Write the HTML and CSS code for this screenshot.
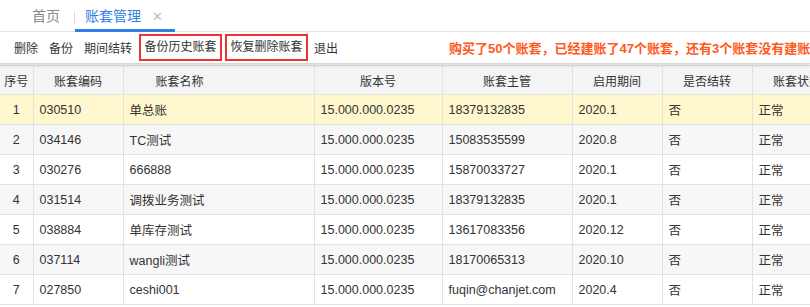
FILE: index.html
```html
<!DOCTYPE html>
<html lang="zh">
<head>
<meta charset="utf-8">
<link rel="stylesheet" href="styles.css">
</head>
<body>
<div class="tabs">
  <div class="tab">首页</div>
  <div class="tab-sep"></div>
  <div class="tab active">账套管理<span class="close">✕</span></div>
</div>
<div class="toolbar">
  <span class="btn">删除</span>
  <span class="btn">备份</span>
  <span class="btn">期间结转</span>
  <span class="btn boxed">备份历史账套</span>
  <span class="btn boxed">恢复删除账套</span>
  <span class="btn">退出</span>
  <span class="notice">购买了50个账套，已经建账了47个账套，还有3个账套没有建账</span>
</div>
<table class="grid">
  <colgroup>
    <col class="c1"><col class="c2"><col class="c3"><col class="c4"><col class="c5"><col class="c6"><col class="c7"><col class="c8">
  </colgroup>
  <thead>
    <tr><th>序号</th><th>账套编码</th><th class="name-h">账套名称</th><th>版本号</th><th>账套主管</th><th>启用期间</th><th>是否结转</th><th>账套状态</th></tr>
  </thead>
  <tbody>
    <tr class="sel"><td class="num">1</td><td>030510</td><td>单总账</td><td>15.000.000.0235</td><td>18379132835</td><td>2020.1</td><td>否</td><td>正常</td></tr>
    <tr class="alt"><td class="num">2</td><td>034146</td><td>TC测试</td><td>15.000.000.0235</td><td>15083535599</td><td>2020.8</td><td>否</td><td>正常</td></tr>
    <tr><td class="num">3</td><td>030276</td><td>666888</td><td>15.000.000.0235</td><td>15870033727</td><td>2020.1</td><td>否</td><td>正常</td></tr>
    <tr class="alt"><td class="num">4</td><td>031514</td><td>调拨业务测试</td><td>15.000.000.0235</td><td>18379132835</td><td>2020.1</td><td>否</td><td>正常</td></tr>
    <tr><td class="num">5</td><td>038884</td><td>单库存测试</td><td>15.000.000.0235</td><td>13617083356</td><td>2020.12</td><td>否</td><td>正常</td></tr>
    <tr class="alt"><td class="num">6</td><td>037114</td><td>wangli测试</td><td>15.000.000.0235</td><td>18170065313</td><td>2020.10</td><td>否</td><td>正常</td></tr>
    <tr><td class="num">7</td><td>027850</td><td>ceshi001</td><td>15.000.000.0235</td><td>fuqin@chanjet.com</td><td>2020.4</td><td>否</td><td>正常</td></tr>
  </tbody>
</table>
</body>
</html>
```
FILE: styles.css
```css
html, body {
  margin: 0;
  padding: 0;
  background: #fff;
  width: 810px;
  height: 307px;
  overflow: hidden;
  font-family: "Liberation Sans", Arial, "Noto Sans CJK SC", sans-serif;
  color: #333;
}
.tabs {
  display: flex;
  align-items: flex-end;
  height: 32px;
  box-sizing: border-box;
  border-bottom: 1px solid #e4e4e4;
  padding-left: 32px;
}
.tab {
  font-size: 14px;
  color: #8a8a8a;
  height: 31px;
  line-height: 33px;
  box-sizing: border-box;
}
.tab-sep {
  width: 1px;
  height: 13px;
  background: #ddd;
  margin: 0 0 7px 14px;
  align-self: flex-end;
}
.tab.active {
  color: #2f7ee6;
  border-bottom: 3px solid #2f7ee6;
  padding: 0 12px 0 10px;
  line-height: 30px;
  height: 31px;
  margin-bottom: -1px;
}
.close {
  color: #bdbdbd;
  font-size: 13px;
  margin-left: 11px;
  font-family: "DejaVu Sans", sans-serif;
}
.toolbar {
  display: flex;
  align-items: center;
  height: 31px;
  padding-left: 14px;
  box-shadow: 0 2px 2px rgba(0,0,0,0.12);
  border-bottom: 1px solid #d8d8d8;
  white-space: nowrap;
  position: relative;
  z-index: 1;
}
.btn {
  font-size: 12px;
  color: #333;
  margin-right: 11px;
}
.btn:nth-child(3) { margin-right: 11px; }
.btn.boxed {
  border: 2px solid #ee3333;
  padding: 2px 3.5px;
  line-height: 19px;
  margin-left: -4px;
  margin-right: 9px;
}
.btn.boxed + .btn.boxed {
  margin-left: -6px;
}
.btn.boxed + .btn:not(.boxed) {
  margin-left: -3px;
}
.notice {
  margin-left: 100px;
  font-size: 13px;
  font-weight: bold;
  color: #ff5a1e;
}
.grid {
  border-collapse: collapse;
  table-layout: fixed;
  width: 842px;
  margin-top: 1px;
  font-size: 12px;
}
.c1 { width: 33px; }
.c2 { width: 90px; }
.c3 { width: 191px; }
.c4 { width: 128px; }
.c5 { width: 130px; }
.c6 { width: 90px; }
.c7 { width: 90px; }
.c8 { width: 90px; }
th, td {
  border: 1px solid #e2e2e2;
  height: 29px;
  padding: 0 6px;
  white-space: nowrap;
  overflow: hidden;
  text-align: left;
  font-weight: normal;
}
td { font-size: 12.5px; }
th {
  background: #f4f4f4;
  text-align: center;
  height: 28px;
  color: #333;
}
th:first-child { padding: 0; }
th.name-h { text-align: left; padding-left: 32px; }
th:first-child, td:first-child { border-left: none; }
td.num { text-align: center; padding: 0; }
tr.sel td { background: #fff7cd; }
tr.alt td { background: #f7f7f7; }
```
